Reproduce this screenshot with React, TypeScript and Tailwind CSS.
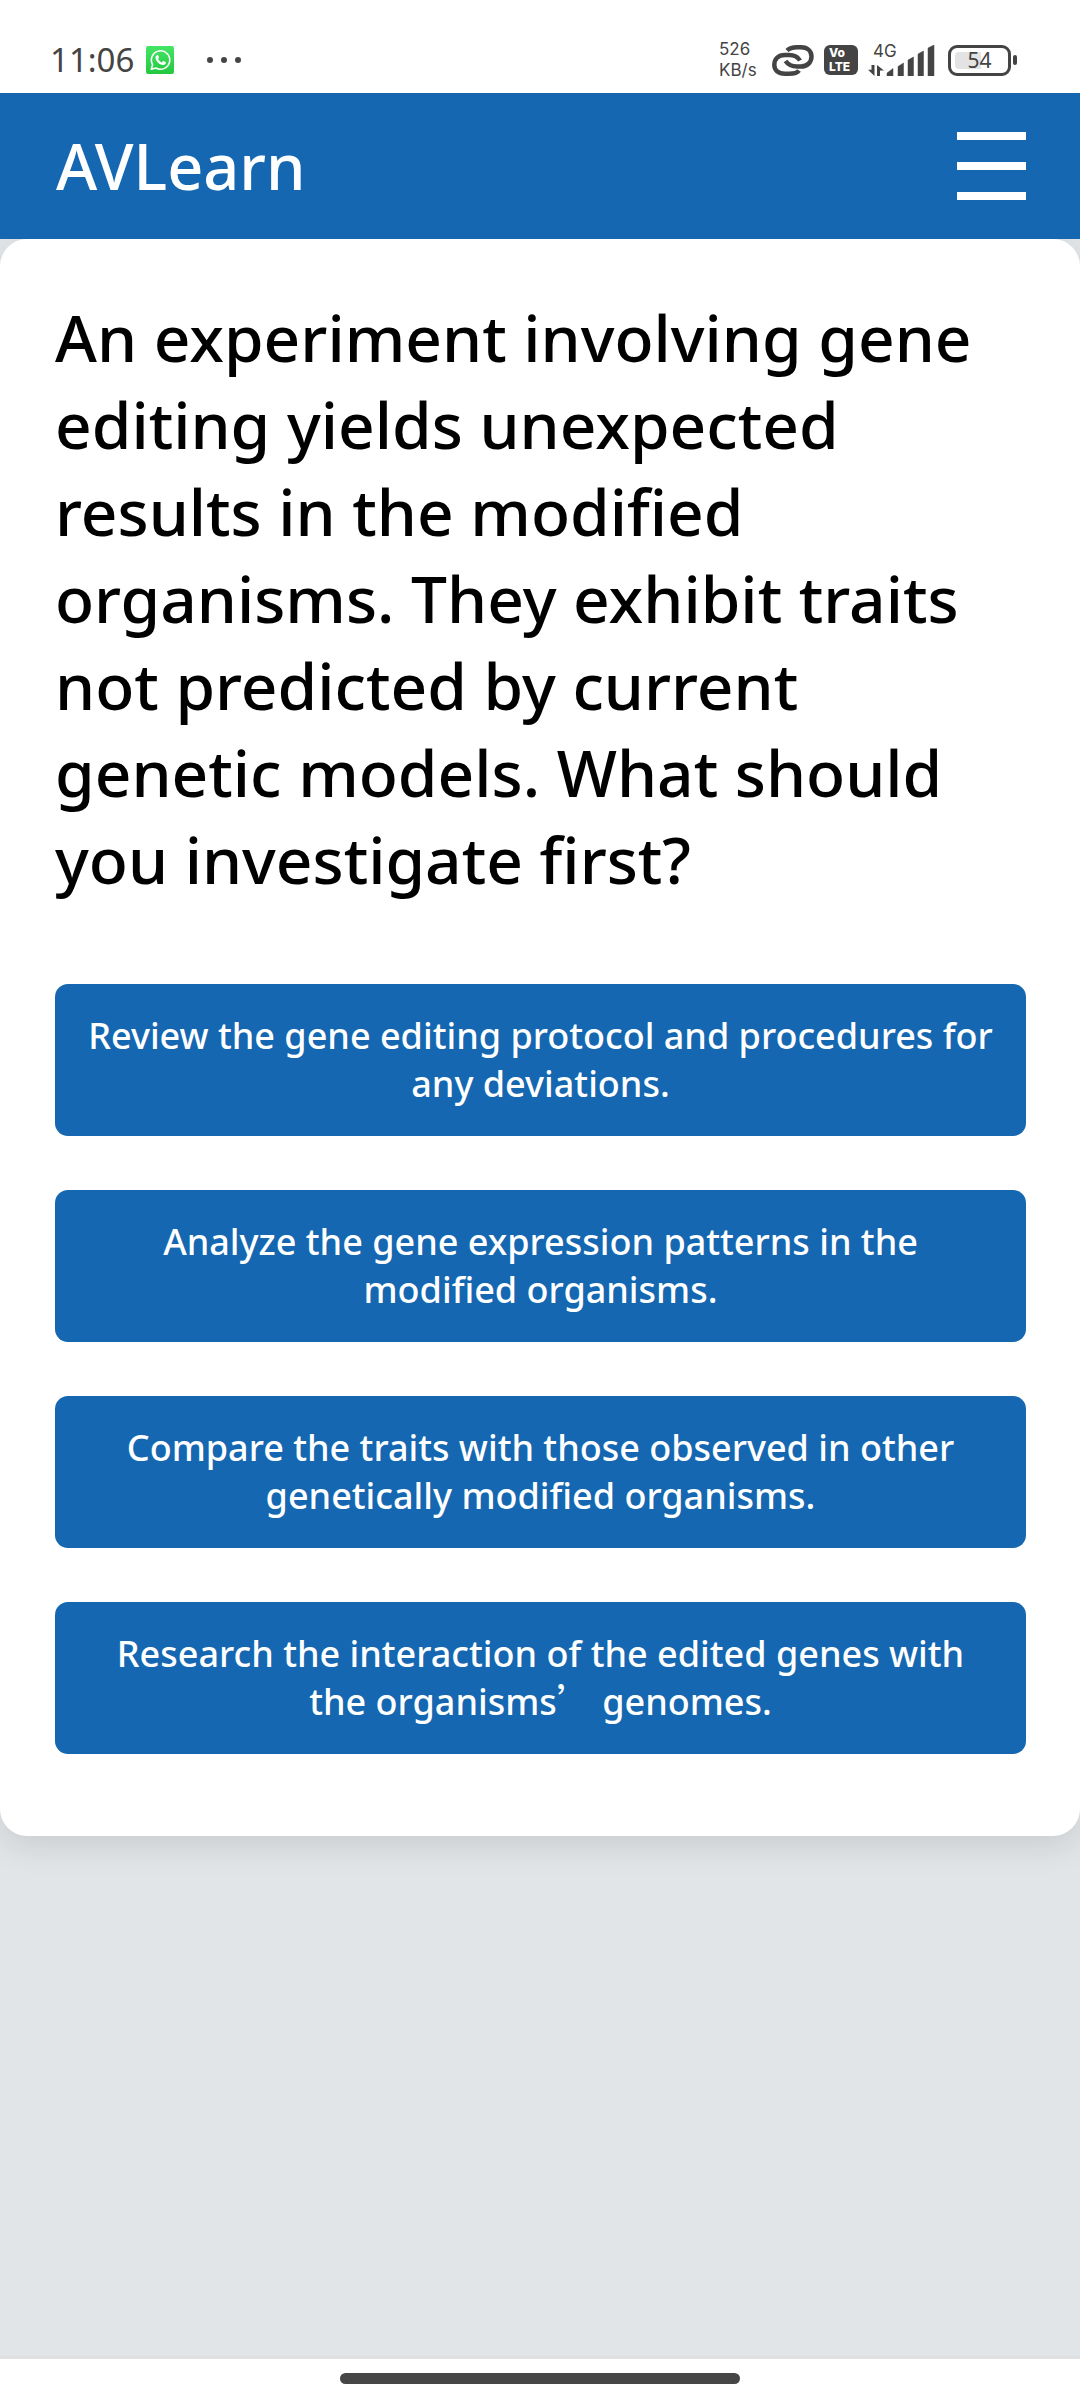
import type { ReactNode } from "react";

const answers: ReactNode[] = [
  <>
    Review the gene editing protocol and procedures for
    <br />
    any deviations.
  </>,
  <>
    Analyze the gene expression patterns in the
    <br />
    modified organisms.
  </>,
  <>
    Compare the traits with those observed in other
    <br />
    genetically modified organisms.
  </>,
  <>
    Research the interaction of the edited genes with
    <br />
    the organisms<span className="font-['Noto_Sans_CJK_SC',sans-serif] leading-none">’</span> genomes.
  </>,
];

function WhatsAppIcon() {
  return (
    <svg viewBox="0 0 28 28" className="ml-3 size-7" aria-label="WhatsApp">
      <defs>
        <linearGradient id="wa" x1="0" y1="0" x2="0" y2="1">
          <stop offset="0" stopColor="#45e566" />
          <stop offset="1" stopColor="#22c93f" />
        </linearGradient>
      </defs>
      <rect width="28" height="28" rx="2" fill="url(#wa)" />
      <path
        d="M5.3 23.2 6.6 18.6A9.2 9.2 0 1 1 10 22Z"
        fill="none"
        stroke="#fff"
        strokeWidth="1.6"
        strokeLinejoin="round"
      />
      <path
        d="M10.9 9.2c.4-.4 1-.4 1.2.1l.9 2c.1.4 0 .6-.9 1.7.9 1.7 2.1 2.8 3.8 3.5l1-1.2c.3-.3.5-.3.8-.2l1.9.9c.4.2.4.4.3.9-.3 1.3-1.5 2-2.7 2-3.9-.3-7.7-4.1-7.7-7.5 0-.9.6-1.6 1.4-2.2Z"
        fill="#fff"
      />
    </svg>
  );
}

function LinkIcon() {
  return (
    <svg
      viewBox="0 0 42 31"
      className="ml-[10px] h-[31px] w-[42px]"
      fill="none"
      stroke="#444"
      strokeWidth="4.5"
      aria-label="Linked device"
    >
      <path d="M15 5.5C18 2.5 21 2.3 25 2.3h4C36 2.3 39.500 6.500 39.500 11.500 39.500 17.500 35 21.500 29 21.500h-4C20 21.500 16 19.500 13.500 16" />
      <path d="M27 25.500C25 28.500 20 28.700 17 28.700h-4C6 28.700 2.300 25 2.300 20 2.300 14 6 10 13 10h4c5 0 9 2 11 5.500" />
    </svg>
  );
}

function SignalIcon() {
  return (
    <svg viewBox="0 0 67 31" className="h-[31px] w-[67px]" fill="#444" aria-label="Signal strength">
      <path d="M6.500 20v11L0 24.800h3.500V20ZM9 31V20l7 5.500h-4V31Z" />
      <path
        d="M19 31v-3l6-4.500V31ZM30 31V21.500l5.500-3.500V31ZM40 31V15l5.500-3V31ZM50 31V9l5.500-3V31ZM60 31V3l6-3V31Z"
        stroke="#444"
        strokeWidth="0.500"
        strokeLinejoin="round"
      />
    </svg>
  );
}

function StatusBar() {
  return (
    <div className="flex h-[93px] items-center bg-white pt-[27px] pr-[63px] pl-[50px] text-[#444]">
      <time className="text-[33px] leading-9">11:06</time>
      <WhatsAppIcon />
      <svg
        viewBox="0 0 34 6"
        className="ml-[33px] h-[6px] w-[34px]"
        fill="#444"
        aria-label="More notifications"
      >
        <circle cx="3" cy="3" r="3" />
        <circle cx="17" cy="3" r="3" />
        <circle cx="31" cy="3" r="3" />
      </svg>

      <div className="ml-auto flex items-center">
        <div className="flex w-[43px] flex-col font-[Inter,sans-serif] text-[17px] leading-[21px]">
          <span>526</span>
          <span>KB/s</span>
        </div>
        <LinkIcon />
        <div className="ml-[10px] flex h-[30px] w-[34px] flex-col items-start justify-center rounded-md bg-[#444] pl-[5px] font-[Inter,sans-serif] text-[12px] leading-[14px] font-extrabold text-white">
          <span>Vo</span>
          <span>LTE</span>
        </div>
        <div className="relative ml-[10px]">
          <SignalIcon />
          <span className="absolute -top-[3px] left-[5px] font-[Inter,sans-serif] text-[17px] leading-[19px]">4G</span>
        </div>
        <div className="ml-[13px] flex items-center gap-[2px]">
          <div className="relative flex h-[31px] w-[63px] items-center justify-center rounded-[9px] border-3 border-[#444]">
            <span className="absolute inset-y-1 left-1 w-[26px] rounded-l-sm bg-[#e3e3e3]" />
            <span className="relative text-[21px] leading-6">54</span>
          </div>
          <span className="h-[10px] w-1 rounded-sm bg-[#444]" />
        </div>
      </div>
    </div>
  );
}

export default function App() {
  return (
    <div className="flex min-h-screen flex-col bg-[#e1e5e8] font-['Noto_Sans',sans-serif]">
      <StatusBar />

      <header className="relative z-10 flex items-center justify-between bg-[#1467b0] py-[34px] pr-[54px] pl-[56px]">
        <h1 className="text-[63px] leading-[78px] font-medium text-white">AVLearn</h1>
        <button type="button" aria-label="Open menu" className="flex w-[69px] flex-col gap-[22px]">
          <span className="h-2 bg-white" />
          <span className="h-2 bg-white" />
          <span className="h-2 bg-white" />
        </button>
      </header>

      <main className="rounded-[27px] bg-white pt-[55px] pr-[54px] pb-[82px] pl-[55px] shadow-[0_11px_32px_rgba(0,0,0,0.1)]">
        <h2 className="text-[64px] leading-[87px] font-medium text-black">
          An experiment involving gene editing yields unexpected results in the modified organisms. They exhibit traits
          not predicted by current genetic models. What should you investigate first?
        </h2>
        <div className="mt-[81px] flex flex-col gap-[54px]">
          {answers.map((answer, i) => (
            <button
              key={i}
              type="button"
              className="rounded-[13px] bg-[#1467b0] px-6 py-7 text-[36px] leading-[48px] font-medium text-white"
            >
              {answer}
            </button>
          ))}
        </div>
      </main>

      <div className="mt-auto flex h-11 justify-center border-t-3 border-[#e0e0e0] bg-white pt-[14px]">
        <div className="h-[11px] w-[37%] rounded-full bg-[#464646]" />
      </div>
    </div>
  );
}
